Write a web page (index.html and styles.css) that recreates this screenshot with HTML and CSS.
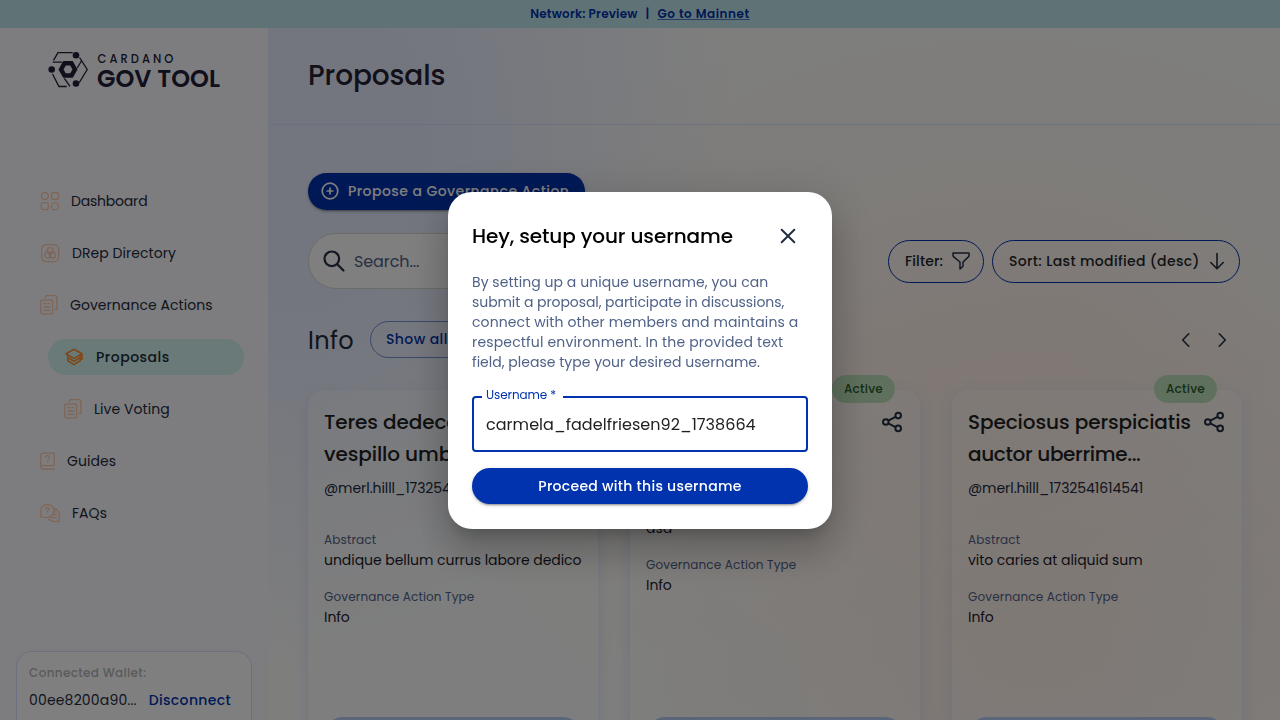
FILE: index.html
```html
<!DOCTYPE html>
<html lang="en">
<head>
<meta charset="utf-8">
<title>Proposals</title>
<link rel="stylesheet" href="styles.css">
</head>
<body>
<svg class="defs" width="0" height="0">
  <symbol id="share" viewBox="0 0 22 22">
    <g fill="none" stroke="#242F42" stroke-width="2">
      <circle cx="17.200" cy="4.600" r="2.800"/><circle cx="4.800" cy="11" r="2.800"/><circle cx="17.200" cy="17.400" r="2.800"/>
      <path d="M7.300 9.600l7.200-3.700M7.300 12.400l7.200 3.700"/>
    </g>
  </symbol>
  <symbol id="docs" viewBox="0 0 18 20">
    <g fill="none" stroke="#FFCBAD" stroke-width="1.3" stroke-linecap="round" stroke-linejoin="round">
      <rect x=".8" y="5" width="11.8" height="14.2" rx="2"/>
      <path d="M5.3 2.5V2a1.3 1.3 0 0 1 1.300-1.300h8.800a1.500 1.500 0 0 1 1.500 1.500v12.200h-1.800"/>
      <path d="M3.800 8.700h2.200M7.800 8.700h2M3.800 12h6M3.800 15.300h6"/>
    </g>
  </symbol>
</svg>
<div class="page">
  <div class="network"><span>Network: Preview</span><span class="bar">|</span><a class="mainnet">Go to Mainnet</a></div>
  <div class="shell">
    <aside class="side">
      <svg class="logo" width="190" height="40" viewBox="0 0 190 40">
        <g fill="none" stroke="#20203A" stroke-width="1.300">
          <path d="M24.700 2.700H10L5.500 10.300M4.700 12.200h9.300M4.500 24l6.500 12.500h7.700M16.300 28.300l5.700 8M31.500 7.500l7.700 12-7.900 13M33.700 10.500l-4.500 7.500"/>
        </g>
        <g fill="#20203A"><circle cx="28" cy="5.200" r="3.300"/><circle cx="3.700" cy="19.500" r="3.300"/><circle cx="28" cy="33.500" r="3.300"/></g>
        <path d="M16.500 13.300h7l3.500 6.100-3.500 6.100h-7l-3.500-6.100z" fill="none" stroke="#20203A" stroke-width="4.400"/>
        <text class="logo-small" x="49.600" y="13.200">CARDANO</text>
        <text class="logo-big" x="49" y="37">GOV TOOL</text>
      </svg>
      <nav class="nav">
        <a class="item dash"><svg width="19" height="20" viewBox="0 0 19 20"><g fill="none" stroke="#FFCBAD" stroke-width="1.300"><circle cx="4.800" cy="5" r="3.500"/><rect x="11.500" y="1.500" width="7" height="7" rx="2"/><rect x="1.300" y="11.700" width="7" height="7" rx="2"/><circle cx="15" cy="15.200" r="3.500"/></g></svg>Dashboard</a>
        <a class="item"><svg width="20" height="20" viewBox="0 0 20 20"><g fill="none" stroke="#FFCBAD" stroke-width="1.300"><rect x="1.700" y="1.700" width="17" height="17" rx="4.500"/><circle cx="10.200" cy="7.700" r="3"/><circle cx="7.900" cy="11.900" r="3"/><circle cx="12.500" cy="11.900" r="3"/></g></svg>DRep Directory</a>
        <a class="item"><svg width="18" height="20"><use href="#docs"/></svg>Governance Actions</a>
        <a class="item sub active"><svg width="20" height="20" viewBox="0 0 20 20"><g fill="none" stroke="#FF9033" stroke-width="1.600" stroke-linejoin="round"><path d="M2 6.800L10 2.200l8 4.600-8 4.600z"/><path d="M3.800 8v5.700l6.200 3.900 6.200-3.900V8M3.800 10.500l6.200 3.700 6.200-3.700"/><path d="M18 7v6"/></g></svg>Proposals</a>
        <a class="item sub"><svg width="18" height="20"><use href="#docs"/></svg>Live Voting</a>
        <a class="item"><svg width="15" height="18" viewBox="0 0 15 18"><g fill="none" stroke="#FFCBAD" stroke-width="1.300" stroke-linecap="round"><path d="M14.200 17H2.500a1.700 1.700 0 0 1 0-3.400h11.700V1.200H2.400A1.600 1.600 0 0 0 .8 2.800v12.500"/><path d="M5.700 5.500a1.900 1.900 0 1 1 2.800 1.700c-.6.400-.9.700-.9 1.400M7.600 10.600v.1"/></g></svg>Guides</a>
        <a class="item"><svg width="20" height="20" viewBox="0 0 20 20"><g fill="none" stroke="#FFCBAD" stroke-width="1.300" stroke-linecap="round" stroke-linejoin="round"><path d="M.8 14.200V7.800a6.500 6.500 0 1 1 6.400 6.500z"/><path d="M14 5.500a6.600 6.600 0 0 1 5.200 6.500v6.300h-6.400a6.500 6.500 0 0 1-4.300-2M14 8.800h1.500M13 11.700h3.500M11 14.700h5.500"/><path d="M5.700 5.900a1.600 1.600 0 1 1 2.300 1.500c-.5.300-.7.600-.7 1.100M7.300 10.500v.1"/></g></svg>FAQs</a>
      </nav>
      <div class="wallet">
        <div class="wallet-label">Connected Wallet:</div>
        <div class="wallet-row"><span class="address">00ee8200a90...</span><a class="disconnect">Disconnect</a></div>
      </div>
    </aside>
    <main class="main">
      <header class="head"><h1>Proposals</h1></header>
      <div class="content">
        <button class="btn propose"><svg width="20" height="20" viewBox="0 0 20 20"><g fill="none" stroke="#fff" stroke-width="1.700" stroke-linecap="round"><circle cx="10" cy="10" r="7.800"/><path d="M10 7.200v5.600M7.200 10h5.600"/></g></svg>Propose a Governance Action</button>
        <div class="tools">
          <div class="search"><svg width="24" height="24" viewBox="0 0 24 24"><g fill="none" stroke="#242F42" stroke-width="2.200" stroke-linecap="round"><circle cx="9.800" cy="9.800" r="7.300"/><path d="M15.200 15.200L21.500 21.500"/></g></svg>Search...</div>
          <button class="chip filter">Filter:<svg width="20" height="20" viewBox="0 0 20 20"><path d="M2 2h16v2.500c0 .6-.2 1-.6 1.400L12 11v4.200L9 18V11L2.700 5.900C2.200 5.500 2 5 2 4.500z" fill="none" stroke="#242F42" stroke-width="1.500" stroke-linejoin="round"/></svg></button>
          <button class="chip sort">Sort: Last modified (desc)<svg width="20" height="20" viewBox="0 0 20 20"><path d="M10 2.500V17.500M3.800 11.500L10 17.700l6.200-6.200" fill="none" stroke="#242F42" stroke-width="1.600" stroke-linecap="round" stroke-linejoin="round"/></svg></button>
        </div>
        <div class="group">
          <h2>Info</h2><button class="show">Show all</button>
          <svg class="arrow" width="12" height="16" viewBox="0 0 12 16"><path d="M8.700 1.800L2.700 8l6 6.200" fill="none" stroke="#242F42" stroke-width="1.600" stroke-linecap="round" stroke-linejoin="round"/></svg>
          <svg class="arrow" width="12" height="16" viewBox="0 0 12 16"><path d="M3.300 1.800l6 6.200-6 6.200" fill="none" stroke="#242F42" stroke-width="1.600" stroke-linecap="round" stroke-linejoin="round"/></svg>
        </div>
        <div class="cards">
          <article class="card">
            <div class="card-top"><h3>Teres dedecor<br>vespillo umbra...</h3></div>
            <div class="user">@merl.hilll_1732541614541</div>
            <div class="label">Abstract</div><div class="value">undique bellum currus labore dedico</div>
            <div class="label">Governance Action Type</div><div class="value">Info</div>
            <div class="view"></div>
          </article>
          <article class="card">
            <span class="badge">Active</span>
            <div class="card-top"><h3></h3><svg width="22" height="22"><use href="#share"/></svg></div>
            <div class="user">@merl.hilll_1732541614541</div>
            <div class="label">Abstract</div><div class="value">asd</div>
            <div class="label">Governance Action Type</div><div class="value">Info</div>
            <div class="view"></div>
          </article>
          <article class="card">
            <span class="badge">Active</span>
            <div class="card-top"><h3>Speciosus perspiciatis<br><span class="tight">auctor uberrime...</span></h3><svg width="22" height="22"><use href="#share"/></svg></div>
            <div class="user">@merl.hilll_1732541614541</div>
            <div class="label">Abstract</div><div class="value">vito caries at aliquid sum</div>
            <div class="label">Governance Action Type</div><div class="value">Info</div>
            <div class="view"></div>
          </article>
        </div>
      </div>
    </main>
  </div>
</div>
<div class="backdrop">
  <section class="modal">
    <div class="modal-head"><h2>Hey, setup your username</h2><svg width="16" height="16" viewBox="0 0 16 16"><path d="M1.700 1.700l12.600 12.600M14.300 1.700L1.700 14.300" stroke="#242F42" stroke-width="2" stroke-linecap="round"/></svg></div>
    <p><span class="l1">By setting up a unique username, you can</span><br><span class="l2">submit a proposal, participate in discussions,</span><br><span class="l3">connect with other members and maintains a</span><br><span class="l4">respectful environment. In the provided text</span><br>field, please type your desired username.</p>
    <div class="field"><span class="field-label">Username *</span>carmela_fadelfriesen92_1738664</div>
    <button class="btn proceed">Proceed with this username</button>
  </section>
</div>
</body>
</html>
```
FILE: styles.css
```css
* { box-sizing: border-box; margin: 0; }
body { font-family: Poppins, Inter, "Liberation Sans", sans-serif; font-size: 14px; color: #212A3D; overflow: hidden; }
button { font: inherit; color: inherit; background: none; border: 0; padding: 0; }
svg { display: block; flex: none; }
h1, h2, h3 { font-weight: 500; }
.defs { position: absolute; }
.page {
  height: 720px; overflow: hidden; display: flex; flex-direction: column;
  background:
    radial-gradient(ellipse 420px 400px at 1040px 640px, rgba(255, 228, 214, .6), rgba(255, 236, 224, 0)),
    radial-gradient(ellipse 560px 420px at 1000px 400px, rgba(255, 240, 230, .8), rgba(255, 240, 230, 0)),
    radial-gradient(ellipse 450px 540px at 290px 140px, #e8edff 30%, rgba(232, 237, 255, 0)),
    #fdfdfb;
}
.network { height: 28px; flex: none; background: #bfe6ee; color: #0033AD; font-size: 12px; font-weight: 600; letter-spacing: .2px; display: flex; align-items: center; justify-content: center; }
.bar { margin: 0 8px; }
.mainnet { text-decoration: underline; letter-spacing: .55px; text-decoration-color: rgba(0, 51, 173, .6); }
.shell { flex: 1; display: flex; min-height: 0; }
.side { width: 268px; flex: none; background: #fbfbff; display: flex; flex-direction: column; padding: 22px 16px 0; }
.logo { margin-left: 32px; }
.logo-small { font-size: 11.500px; font-weight: 500; letter-spacing: 3px; fill: #20203A; }
.logo-big { font-size: 24px; font-weight: 600; letter-spacing: .05px; fill: #20203A; }
.nav { margin: 93px 8px 0 8px; display: flex; flex-direction: column; gap: 16px; }
.item { height: 36px; display: flex; align-items: center; gap: 12px; padding-left: 16px; color: #212A3D; letter-spacing: .05px; }
.dash { letter-spacing: -.2px; }
.sub { margin-left: 16px; }
.item.sub { margin-left: 24px; }
.active { background: #d3f4f0; border-radius: 18px; font-weight: 500; letter-spacing: .5px; }
.wallet { margin-top: 120px; flex: 1; border: 1px solid #d6e2ff; border-bottom: 0; border-radius: 16px 16px 0 0; background: #fff; padding: 12px; }
.wallet-label { font-size: 12px; line-height: 18px; font-weight: 500; color: #b5b5b5; letter-spacing: .35px; }
.wallet-row { display: flex; gap: 12px; margin-top: 8px; line-height: 21px; }
.address { letter-spacing: .17px; }
.disconnect { color: #0033AD; font-weight: 500; letter-spacing: .35px; }
.main { flex: 1; min-width: 0; }
.head { height: 97px; border-bottom: 1px solid #d6e2ff; padding: 0 40px; display: flex; align-items: center; }
h1 { font-size: 28px; color: #242232; letter-spacing: -.12px; }
.content { padding: 48px 40px 0; }
.btn { height: 36.500px; border-radius: 18.250px; background: #0033AD; color: #fff; font-weight: 500; letter-spacing: .45px; display: flex; align-items: center; box-shadow: 0 3px 1px -2px rgba(0,0,0,.2), 0 2px 2px rgba(0,0,0,.14), 0 1px 5px rgba(0,0,0,.12); }
.propose { padding: 0 15.500px 0 12px; gap: 8px; }
.tools { display: flex; align-items: center; gap: 8px; margin-top: 23.500px; }
.search { width: 450px; height: 56px; border: 1px solid #d8d8d0; border-radius: 28px; background: #fff; display: flex; align-items: center; gap: 8px; padding-left: 13px; font-size: 16px; color: #506288; letter-spacing: -.1px; }
.chip { height: 43px; border: 1px solid #0033AD; border-radius: 21.500px; font-weight: 500; letter-spacing: .35px; display: flex; align-items: center; justify-content: space-between; padding: 0 12px 0 16px; color: #212529; }
.filter { width: 96px; margin-left: auto; letter-spacing: .1px; }
.sort { width: 248px; }
.group { display: flex; align-items: center; margin-top: 32px; height: 37px; padding-right: 12px; }
.group h2 { font-size: 24px; font-weight: 400; width: 62px; letter-spacing: .4px; padding-top: 1px; }
.show { width: 110px; height: 37px; border: 1px solid rgba(0, 51, 173, .5); border-radius: 18.500px; color: #0033AD; font-weight: 500; letter-spacing: .4px; text-align: left; padding-left: 15px; margin-right: auto; }
.arrow + .arrow { margin-left: 24px; }
.cards { display: grid; grid-template-columns: repeat(3, 290px); gap: 32px; margin-top: 32px; }
.card { position: relative; height: 380px; padding: 16px; border-radius: 16px; background: rgba(255, 255, 255, .3); box-shadow: 0 4px 15px rgba(210, 218, 250, .65); display: flex; flex-direction: column; }
.card-top { display: flex; justify-content: space-between; }
.card-top svg { margin: 5px 1px 0 0; }
h3 { font-size: 20px; line-height: 32px; min-height: 32px; color: #212121; white-space: nowrap; letter-spacing: -.09px; }
.tight { letter-spacing: -.34px; }
.user { line-height: 21px; margin: 8px 0 20px; letter-spacing: -.06px; }
.label { font-size: 12px; line-height: 18px; color: #506288; margin-top: 14px; letter-spacing: .15px; }
.user + .label { margin-top: 12px; }
.value { line-height: 21px; margin-top: 1px; padding-bottom: 3px; color: #1b1b2b; white-space: nowrap; letter-spacing: -.05px; }
.view { position: absolute; left: 16px; right: 16px; top: 327px; height: 38px; border-radius: 19px; background: #b8ccf6; }
.badge { position: absolute; right: 25px; top: -15px; height: 28px; border-radius: 14px; padding: 0 12px; background: #bfe2bc; color: #2a5c2a; font-size: 12px; font-weight: 500; line-height: 28px; letter-spacing: .25px; }
.backdrop { position: fixed; inset: 0; background: rgba(0, 0, 0, .5); display: flex; align-items: center; justify-content: center; }
.modal { width: 384px; height: 337px; padding: 24px; border-radius: 24px; background: #fff; display: flex; flex-direction: column; box-shadow: 0 11px 15px -7px rgba(0,0,0,.2), 0 24px 38px 3px rgba(0,0,0,.14), 0 9px 46px 8px rgba(0,0,0,.12); }
.modal-head { height: 40px; display: flex; align-items: center; justify-content: space-between; padding-right: 12px; }
.modal-head h2 { font-size: 20px; color: #000; letter-spacing: -.11px; }
.modal p { line-height: 20px; color: #506288; margin-top: 16px; white-space: nowrap; letter-spacing: .02px; }
.l1 { letter-spacing: .05px; }
.l2 { letter-spacing: -.07px; }
.l3 { letter-spacing: .1px; }
.l4 { letter-spacing: .16px; }
.field { position: relative; height: 56px; margin-top: 24px; flex: none; border: 2px solid #0033AD; border-radius: 4px; padding-left: 12px; font-size: 16px; line-height: 53px; color: #212121; letter-spacing: .04px; }
.field-label { position: absolute; left: 8px; top: -12px; width: 81px; padding-left: 4px; background: #fff; color: #0033AD; font-size: 12px; line-height: 18px; letter-spacing: -.08px; }
.proceed { justify-content: center; margin-top: 16px; padding-top: 1px; flex: none; letter-spacing: .28px; }
```
